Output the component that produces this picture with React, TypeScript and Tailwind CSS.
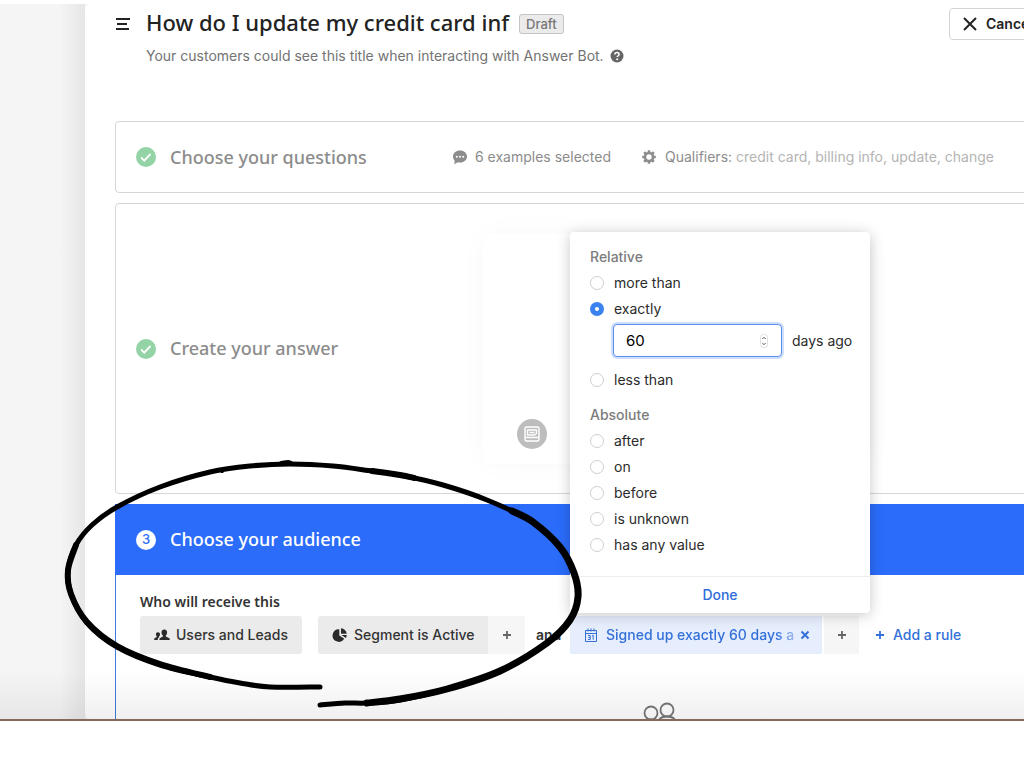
import { useState } from "react";
import type { ReactNode } from "react";

const relativeOptions = ["more than", "exactly", "less than"];
const absoluteOptions = ["after", "on", "before", "is unknown", "has any value"];

const CheckBadge = () => (
  <svg className="size-5 shrink-0" viewBox="0 0 20 20" fill="none">
    <circle cx="10" cy="10" r="10" fill="#93d3a6" />
    <path d="M5 10.4l3.2 3.2 6.4-6.6" stroke="#fff" strokeWidth="1.8" />
  </svg>
);

const ChatIcon = () => (
  <svg className="size-4 shrink-0" viewBox="0 0 16 16">
    <path d="M8 1.5c4 0 7 2.6 7 6s-3 6.1-7 6.1c-.8 0-1.5-.1-2.2-.3L2.2 15.3l.5-3.6C1.6 10.6 1 9.2 1 7.5c0-3.4 3-6 7-6z" fill="#8c8c8c" />
    <g fill="#fff">
      <circle cx="4.8" cy="7.7" r="1" />
      <circle cx="8" cy="7.7" r="1" />
      <circle cx="11.2" cy="7.7" r="1" />
    </g>
  </svg>
);

const GearIcon = () => (
  <svg className="size-4 shrink-0" viewBox="0 0 16 16" fill="none" stroke="#8c8c8c">
    <circle cx="8" cy="8" r="4" strokeWidth="2.6" />
    <path
      d="M8 1.2v2.500M8 12.300v2.500M1.200 8h2.500M12.300 8h2.500M3.200 3.200l1.800 1.800M11 11l1.800 1.800M3.200 12.800l1.800-1.800M11 5l1.800-1.800"
      strokeWidth="2.6"
    />
  </svg>
);

const UsersIcon = () => (
  <svg className="size-4 shrink-0" viewBox="0 0 16 16" fill="#2a2a2a">
    <path d="M10.3 2.5c1.8 0 2.8 1.2 2.8 2.9 0 1.3-.6 2.5-1.3 3.1v1.1l3.2 1.3c.6.3.8.8.8 2.1H5.4c0-1.3.2-1.8.8-2.1l2.7-1.3V8.5C8.1 7.9 7.5 6.7 7.5 5.4c0-1.7 1-2.9 2.8-2.9z" />
    <path d="M4 5.2c1.3 0 2 .8 2 2.1 0 1-.4 1.8-.9 2.2v.8c-.9.5-1.3 1.3-1.4 2.7H.2c0-1.2.1-1.7.7-2l1.9-.9v-.6c-.5-.5-.9-1.200-.9-2.200 0-1.300.8-2.100 2.100-2.100z" />
  </svg>
);

const PieIcon = () => (
  <svg className="size-4 shrink-0" viewBox="0 0 16 16" fill="#2a2a2a">
    <path d="M7.3 2.2v6.300l5 3.300a6.300 6.300 0 1 1-5-9.600z" />
    <path d="M9 1.2a6 6 0 0 1 5.7 5.6H9z" />
    <path d="M9.4 8h5.3c0 1-.3 2-.8 2.9z" />
  </svg>
);

const CalendarIcon = () => (
  <svg className="size-4 shrink-0" viewBox="0 0 16 16" fill="none" stroke="#3370d8">
    <path d="M2.5 3.5h11v11h-11zM2.5 6.5h11M5 1.5v3M8 1.5v3M11 1.5v3" />
    <path d="M5 8.5h2.2v2H5.7h1.5v2H5M9 8.9l1.2-.5v4.3" />
  </svg>
);

const PlusIcon = () => (
  <svg className="size-3 shrink-0" viewBox="0 0 12 12" fill="none" stroke="currentColor" strokeWidth="1.8">
    <path d="M6 2v8M2 6h8" />
  </svg>
);

type RadioRowProps = {
  label: string;
  selected: string;
  onSelect: (value: string) => void;
};

const RadioRow = ({ label, selected, onSelect }: RadioRowProps) => (
  <label className="flex h-[26px] items-center gap-2.5 text-[#2b2b2b]">
    <input
      type="radio"
      name="signed-up"
      checked={selected === label}
      onChange={() => onSelect(label)}
      className="size-3.5 appearance-none rounded-full border border-[#cfcfcf] bg-white checked:border-[5px] checked:border-[#3b82f0]"
    />
    {label}
  </label>
);

const DatePopover = () => {
  const [selected, setSelected] = useState("exactly");
  const [days, setDays] = useState("60");

  return (
    <div className="absolute bottom-full left-0 z-10 mb-[3px] w-[300px] rounded bg-white pt-3 text-sm font-normal shadow-[0_2px_14px_rgba(0,0,0,0.22)]">
      <div className="px-5">
        <div className="flex h-[26px] items-center font-medium text-[#7c7c7c]">Relative</div>
        {relativeOptions.map((option) => (
          <div key={option}>
            <RadioRow label={option} selected={selected} onSelect={setSelected} />
            {option === "exactly" && (
              <div className="mt-0.5 mb-2.5 flex items-center gap-2.5 pl-[23px] text-[#2b2b2b]">
                <div className="relative">
                  <input
                    type="number"
                    aria-label="Days"
                    value={days}
                    onChange={(e) => setDays(e.target.value)}
                    className="block h-[33px] w-[169px] rounded border border-[#5b8def] bg-white px-3 text-[15px] text-black ring-2 ring-[#cfdffb] outline-none [appearance:textfield]"
                  />
                  <svg className="absolute top-2.5 right-3.5 h-3.5 w-2" viewBox="0 0 8 14" fill="none">
                    <rect x=".5" y=".5" width="7" height="13" rx="3" stroke="#dedede" />
                    <path d="M2.3 5L4 3.3 5.7 5M2.3 9L4 10.7 5.7 9" stroke="#555" />
                  </svg>
                </div>
                <span>days ago</span>
              </div>
            )}
          </div>
        ))}
        <div className="mt-2 flex h-[27px] items-center font-medium text-[#7c7c7c]">Absolute</div>
        {absoluteOptions.map((option) => (
          <RadioRow key={option} label={option} selected={selected} onSelect={setSelected} />
        ))}
      </div>
      <button className="mt-[18px] h-[37px] w-full border-t border-[#ededed] font-medium text-[#2f6bdb]">Done</button>
    </div>
  );
};

const StepTitle = ({ children }: { children: ReactNode }) => (
  <h2 className="font-['Noto_Sans',sans-serif] text-[18px] font-medium whitespace-nowrap">{children}</h2>
);

// Marker drawing around the audience step, as [x, y] points per stroke width
const inkStrokes: { width: number; points: number[][] }[] = [
  {
    width: 5,
    points: [
      [320, 687], [270, 687], [240, 683], [210, 677], [160, 665], [117, 647], [87, 623], [71, 594], [68, 570],
      [76, 545], [92, 525], [117, 507], [160, 487], [210, 472], [250, 466], [290, 464], [333, 466], [372, 471],
      [400, 475], [443, 485], [487, 500], [533, 522], [560, 547], [574, 573], [578, 597], [570, 620],
      [547, 643], [500, 671], [447, 689], [400, 700], [367, 703], [345, 703], [320, 705],
    ],
  },
  { width: 6, points: [[210, 677], [160, 664], [117, 646], [87, 622], [71, 594], [68, 570], [76, 545]] },
  { width: 6, points: [[372, 471], [400, 475], [414, 478]] },
  {
    width: 7,
    points: [[512, 511], [533, 522], [560, 547], [574, 573], [578, 597], [570, 620], [547, 643], [500, 671], [447, 689], [400, 699], [367, 703]],
  },
  { width: 4, points: [[216, 471], [220, 470], [222, 471]] },
  { width: 4, points: [[281, 463], [288, 462], [291, 463]] },
];

const smoothPath = (points: number[][]) => {
  let d = `M${points[0][0]} ${points[0][1]}`;
  for (let i = 0; i < points.length - 1; i++) {
    const [p0, p1, p2, p3] = [points[i - 1] ?? points[i], points[i], points[i + 1], points[i + 2] ?? points[i + 1]];
    d += `C${p1[0] + (p2[0] - p0[0]) / 6} ${p1[1] + (p2[1] - p0[1]) / 6} ${p2[0] - (p3[0] - p1[0]) / 6} ${p2[1] - (p3[1] - p1[1]) / 6} ${p2[0]} ${p2[1]}`;
  }
  return d;
};

const InkCircle = () => (
  <svg
    className="pointer-events-none absolute top-[450px] left-[50px] z-20 h-[270px] w-[550px]"
    viewBox="50 450 550 270"
    fill="none"
    stroke="#000"
    strokeLinecap="round"
    strokeLinejoin="round"
  >
    {inkStrokes.map((stroke, i) => (
      <path key={i} d={smoothPath(stroke.points)} strokeWidth={stroke.width} />
    ))}
  </svg>
);

const App = () => {
  return (
    <div className="relative overflow-hidden bg-white pt-1 font-[Inter,sans-serif]">
      <div className="flex h-[717px] overflow-hidden border-b-2 border-[#86695a] bg-[#f5f5f5]">
        <aside className="w-[85px] shrink-0 bg-linear-to-r from-[#f5f5f5] from-70% to-[#e6e6e6]" />

        <main className="relative min-w-0 flex-1 rounded-l-md bg-white pl-[30px]">
          <header className="flex h-[117px] items-start">
            <button aria-label="Menu" className="mt-3 text-[#222]">
              <svg className="size-4" viewBox="0 0 16 16" fill="none" stroke="currentColor" strokeWidth="2">
                <path d="M1 3h14M2 8h10M1 13h13" />
              </svg>
            </button>
            <div className="ml-[15px]">
              <div className="flex items-center gap-2.5">
                <h1 className="font-['Noto_Sans',sans-serif] text-[22px] leading-9 font-medium whitespace-nowrap text-[#222]">
                  How do I update my credit card inf
                </h1>
                <span className="mt-1 rounded-[3px] border border-[#c4c4c4] bg-[#ebebeb] px-1.5 text-[13px] leading-[18px] font-medium text-[#777]">
                  Draft
                </span>
              </div>
              <p className="mt-1.5 flex items-center gap-1.5 text-sm text-[#737373]">
                Your customers could see this title when interacting with Answer Bot.
                <svg className="size-3.5" viewBox="0 0 14 14" fill="none">
                  <circle cx="7" cy="7" r="6.5" fill="#666" />
                  <path d="M4.9 5.5c0-1.2.9-1.9 2.1-1.9s2.1.7 2.1 1.8c0 1.3-1.9 1.4-1.9 2.7" stroke="#fff" strokeWidth="1.5" />
                  <circle cx="7.2" cy="10.2" r="1" fill="#fff" />
                </svg>
              </p>
            </div>
            <button className="mt-1 -mr-[22px] ml-auto flex h-8 shrink-0 items-center gap-2 rounded border border-[#d4d4d4] px-3 text-sm font-semibold text-[#222]">
              <svg className="size-4" viewBox="0 0 16 16" fill="none" stroke="currentColor" strokeWidth="2">
                <path d="M2 2l12 12M14 2L2 14" />
              </svg>
              Cancel
            </button>
          </header>

          <div className="-mr-4 flex flex-col gap-2.5">
            <section className="flex h-[72px] items-center rounded border border-[#d6d6d6] pl-5 text-[#8c8c8c]">
              <div className="flex w-[316px] items-center gap-3.5">
                <CheckBadge />
                <StepTitle>Choose your questions</StepTitle>
              </div>
              <div className="flex w-[189px] items-center gap-[7px] text-sm">
                <ChatIcon />
                6 examples selected
              </div>
              <div className="flex items-center gap-2 text-sm whitespace-nowrap">
                <GearIcon />
                <span>
                  Qualifiers: <span className="text-[#b4b4b4]">credit card, billing info, update, change</span>
                </span>
              </div>
            </section>

            <section className="flex h-[291px] items-center rounded border border-[#d6d6d6] pl-5 text-[#8c8c8c]">
              <div className="flex w-[347px] items-center gap-3.5">
                <CheckBadge />
                <StepTitle>Create your answer</StepTitle>
              </div>
              <div className="flex h-[230px] w-[387px] items-end rounded bg-white pb-[15px] pl-[34px] shadow-[0_0_30px_-4px_rgba(0,0,0,0.04)]">
                <svg className="size-[30px]" viewBox="0 0 30 30" fill="none" stroke="#fff" strokeWidth="1.4">
                  <circle cx="15" cy="15" r="15" fill="#bdbdbd" stroke="none" />
                  <rect x="8" y="8" width="14" height="14" rx="1.5" />
                  <path d="M10.5 11h9v3.5l-2 1.5h-7zM8 18.5h14M12.5 13.5h5" />
                </svg>
              </div>
            </section>

            <section>
              <div className="flex h-[71px] items-center gap-3.5 bg-[#2b6cfb] pl-[21px] text-white">
                <span className="flex size-5 items-center justify-center rounded-full bg-white text-[13px] font-medium text-[#2b6cfb]">
                  3
                </span>
                <StepTitle>Choose your audience</StepTitle>
              </div>
              <div className="h-[145px] border-l border-[#3b7ce0] pt-[17px] pl-6">
                <h3 className="font-['Noto_Sans',sans-serif] text-sm font-semibold text-[#333]">Who will receive this</h3>
                <div className="mt-1 flex h-[38px] items-stretch text-sm font-medium whitespace-nowrap text-[#333]">
                  <button className="flex w-[162px] items-center gap-1.5 rounded-[3px] bg-[#ebebeb] pl-3.5">
                    <UsersIcon />
                    Users and Leads
                  </button>
                  <button className="ml-4 flex w-[170px] items-center gap-1.5 rounded-l-[3px] bg-[#ebebeb] pl-3.5">
                    <PieIcon />
                    Segment is Active
                  </button>
                  <button aria-label="Add condition" className="flex w-[37px] items-center justify-center bg-[#f6f6f6] text-[#666]">
                    <PlusIcon />
                  </button>
                  <span className="flex w-[45px] items-center pl-[11px] font-semibold">and</span>
                  <div className="relative flex w-[252px] items-center bg-[#e6edfd] pl-[13px] text-[#3370d8]">
                    <DatePopover />
                    <button className="flex items-center gap-[7px]">
                      <CalendarIcon />
                      <span className="w-[190px] mask-r-from-90% mask-r-to-105% text-left">Signed up exactly 60 days a</span>
                    </button>
                    <button aria-label="Remove rule" className="ml-[3px]">
                      <svg className="size-3" viewBox="0 0 12 12" fill="none" stroke="currentColor" strokeWidth="2">
                        <path d="M2.5 2.5l7 7M9.5 2.5l-7 7" />
                      </svg>
                    </button>
                  </div>
                  <button aria-label="Add condition" className="ml-0.5 flex w-[35px] items-center justify-center bg-[#f6f6f6] text-[#666]">
                    <PlusIcon />
                  </button>
                  <button className="ml-[15px] flex items-center gap-[7px] text-[#3370d8]">
                    <PlusIcon />
                    Add a rule
                  </button>
                </div>
                <svg className="mt-12 ml-[501px] h-10 w-9" viewBox="0 0 36 40" fill="none" stroke="#777" strokeWidth="1.8">
                  <circle cx="10" cy="11" r="6.5" />
                  <circle cx="26" cy="8" r="6.5" />
                  <path d="M3 22c1-3 4-4.500 7-4.500s4 .5 6 2M17 20c1-4 4-5.500 9-5.500s8 1.500 9 5.500" />
                </svg>
              </div>
            </section>
          </div>
        </main>
      </div>
      <div className="pointer-events-none absolute inset-x-0 top-[670px] h-[49px] bg-linear-to-b from-transparent to-black/6" />
      <InkCircle />
      <footer className="h-12" />
    </div>
  );
};

export default App;
